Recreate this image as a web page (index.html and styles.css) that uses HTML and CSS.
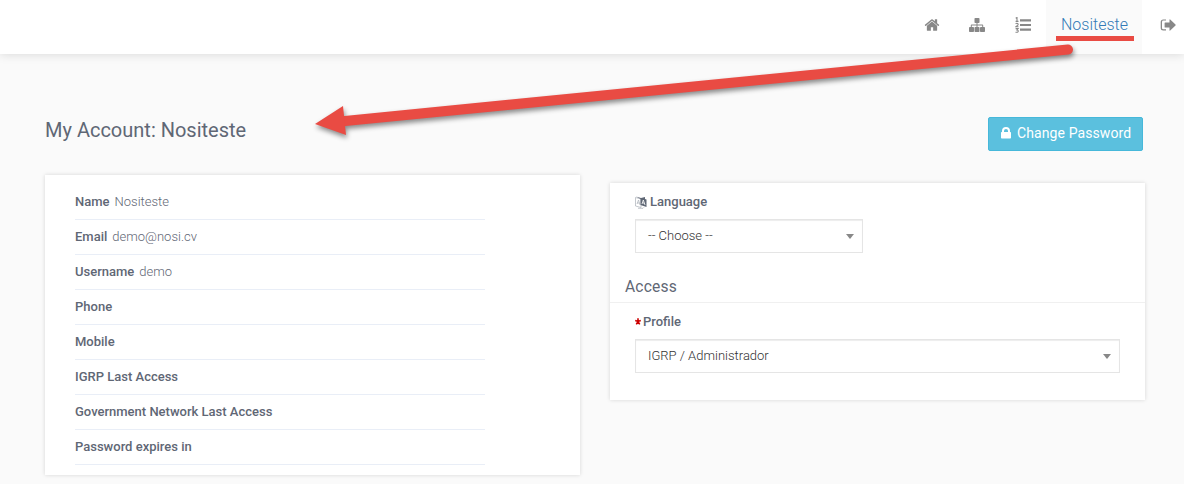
FILE: index.html
```html
<!DOCTYPE html>
<html lang="en">
<head>
<meta charset="utf-8">
<title>My Account</title>
<link rel="stylesheet" href="styles.css">
</head>
<body>
<header class="topbar">
  <nav class="nav">
    <a class="nav-item home"><svg class="icon" viewBox="0 0 1792 1792"><path d="M1472 992v480q0 26-19 45t-45 19h-384v-384h-256v384h-384q-26 0-45-19t-19-45v-480q0-1 .5-3t.5-3l575-474 575 474q1 2 1 6zm223-69l-62 74q-8 9-21 11h-3q-13 0-21-7l-692-577-692 577q-12 8-24 7-13-2-21-11l-62-74q-8-10-7-23.5t11-21.5l719-599q32-26 76-26t76 26l244 204v-195q0-14 9-23t23-9h192q14 0 23 9t9 23v408l219 182q10 8 11 21.5t-7 23.5z"/></svg></a>
    <a class="nav-item"><svg class="icon" viewBox="0 0 16 16"><rect x="5.5" y="1" width="5" height="5" rx=".8"/><rect x="0" y="10" width="5" height="5" rx=".8"/><rect x="5.5" y="10" width="5" height="5" rx=".8"/><rect x="11" y="10" width="5" height="5" rx=".8"/><path d="M7.5 5h1v2.4H13.400q.8 0 .8.8V11h-1V8.400H8.500V11h-1V8.400H2.800V11h-1V8.200q0-.8.8-.8H7.500z"/></svg></a>
    <a class="nav-item"><svg class="icon" viewBox="0 0 16 16"><path d="M5 2.200h11v2.200H5zM5 6.900h11v2.200H5zM5 11.600h11v2.200H5z"/><path class="digits" d="M.7 1.300L2 .5v4M.6 4.400h2.900M.6 6.900q1-1 2-.4t.2 1.600L.8 9.700h2.700M.6 11.600h2.500L2 13q1.400 0 1.200 1.300T.5 15.200"/></svg></a>
    <a class="nav-item active"><span class="user">Nositeste</span></a>
    <a class="nav-item last"><svg class="icon" viewBox="0 0 16 16"><path d="M6 2.400v1.200H3.300Q2 3.600 2 5v6q0 1.300 1.300 1.300H6v1.200H3.300Q.7 13.500.7 11V5Q.7 2.400 3.300 2.400z"/><path d="M9.500 2.700q0-.8.700-.3l5.300 5.200q.4.400 0 .8l-5.300 5.200q-.7.500-.7-.3V10.500H5.200q-.6 0-.6-.6V6.100q0-.6.6-.6H9.500z"/></svg></a>
  </nav>
</header>
<main class="content">
  <div class="heading">
    <h1 class="title">My Account: Nositeste</h1>
    <button class="button"><svg class="lock" viewBox="0 0 10 12"><path d="M1 5V4a4 4 0 0 1 8 0v1h.3q.7 0 .7.700v5q0 .8-.8.8H.8q-.8 0-.8-.8v-5Q0 5 .7 5zm2 0h4V4a2 2 0 0 0-4 0z"/></svg>Change Password</button>
  </div>
  <div class="columns">
    <section class="card details">
      <div class="row"><b>Name</b><span>Nositeste</span></div>
      <div class="row"><b>Email</b><span>demo@nosi.cv</span></div>
      <div class="row"><b>Username</b><span>demo</span></div>
      <div class="row"><b>Phone</b></div>
      <div class="row"><b>Mobile</b></div>
      <div class="row"><b>IGRP Last Access</b></div>
      <div class="row"><b>Government Network Last Access</b></div>
      <div class="row"><b>Password expires in</b></div>
    </section>
    <section class="card settings">
      <div class="field">
        <div class="label"><svg class="language" viewBox="0 0 12 13"><path class="page" d="M.5 1.500L6 3v8.500L.5 10zM2 8l1.500-4L5 9M2.300 7h2.200M3 12.300h5l1-1"/><path class="sheet" d="M1 .5l5 1.500 4-1v2l1.500.5V11L5.500 9V3z"/><path class="letter" d="M7 8l1.300-4L10 9M7.500 6.800l2 .5"/></svg>Language</div>
        <div class="select short">-- Choose --<i class="caret"></i></div>
      </div>
      <h2 class="subtitle">Access</h2>
      <div class="field">
        <div class="label"><svg class="required" viewBox="0 0 6 7"><path d="M3 .3v3.200M.2 2.400L3 3.500l2.800-1.100M1.300 6.300L3 3.500l1.700 2.800"/></svg>Profile</div>
        <div class="select">IGRP / Administrador<i class="caret"></i></div>
      </div>
    </section>
  </div>
</main>
<svg class="arrow" viewBox="0 0 1184 484"><path d="M1068 49.500L340 121.500" class="shaft"/><path d="M315 124L343 106L346 135z" class="head"/></svg>
</body>
</html>
```
FILE: styles.css
```css
* { box-sizing: border-box; }
body {
  margin: 0;
  height: 484px;
  overflow: hidden;
  background: #fafafa;
  color: #5f6775;
  font: 300 13px/20px Roboto, sans-serif;
}
.topbar {
  height: 54px;
  background: #fff;
  box-shadow: 0 0 10px rgba(0, 0, 0, .15);
}
.nav { display: flex; justify-content: flex-end; height: 54px; }
.nav-item {
  display: flex;
  justify-content: center;
  width: 46px;
  padding-top: 17px;
}
.nav-item.home { padding-left: 2px; }
.nav-item.active { width: 96px; padding: 15px 0 0 2px; background: #fafafa; }
.nav-item.last { width: 42px; padding-left: 10px; }
.icon { width: 16px; height: 16px; fill: #888; }
.digits { fill: none; stroke: #888; stroke-width: 1.1; }
.user {
  height: 26px;
  width: 78px;
  padding-right: 1px;
  border-bottom: 5px solid #e94b43;
  color: #337ab7;
  font-size: 16px;
  text-align: center;
  white-space: nowrap;
}
.content { padding: 63px 39px 0 45px; }
.heading {
  display: flex;
  justify-content: space-between;
  height: 58px;
  padding-right: 2px;
}
.title { margin: 0; font-size: 20px; line-height: 26px; font-weight: 400; }
.button {
  display: flex;
  align-items: center;
  gap: 6px;
  width: 155px;
  height: 34px;
  padding: 0 0 2px 12px;
  border: 1px solid #46b8da;
  border-radius: 2px;
  background: #5bc0de;
  color: #fff;
  font: 400 14px/20px Roboto, sans-serif;
  letter-spacing: .1px;
  white-space: nowrap;
}
.lock { width: 10px; height: 12px; margin-bottom: 1px; fill: #fff; }
.columns { display: flex; align-items: flex-start; gap: 30px; }
.card {
  width: 535px;
  background: #fff;
  box-shadow: 0 0 4px rgba(0, 0, 0, .15);
}
.details { height: 300px; padding: 10px 95px 0 30px; }
.row {
  display: flex;
  gap: 5px;
  height: 35px;
  padding-top: 7px;
  border-bottom: 1px solid #e9eef7;
}
b { font-weight: 500; }
.settings { height: 217px; margin-top: 8px; padding-top: 9px; }
.field { padding: 0 25px; }
.label { display: flex; align-items: center; height: 27px; padding-bottom: 7px; font-weight: 500; }
.language { width: 12px; height: 13px; margin-right: 3px; }
.page { fill: none; stroke: #aab0b8; stroke-width: .7; }
.sheet { fill: #5f6775; }
.letter { fill: none; stroke: #fff; stroke-width: .8; }
.required { width: 6px; height: 7px; margin: 0 2px 1px 0; fill: none; stroke: #c00; stroke-width: 1.6; }
.select {
  display: flex;
  align-items: center;
  justify-content: space-between;
  height: 34px;
  padding: 0 8px 0 12px;
  border: 1px solid #e5e5e5;
  box-shadow: inset 0 1px 1px rgba(0, 0, 0, .075);
  color: #333;
}
.short { width: 228px; }
.caret {
  margin-top: 1px;
  border: 4px solid transparent;
  border-top: 5px solid #888;
  border-bottom: 0;
}
.subtitle {
  height: 38px;
  margin: 12px 0 9px;
  padding: 12px 15px 0;
  border-bottom: 1px solid #f0f0f0;
  font-size: 15.6px;
  line-height: 20px;
  letter-spacing: .2px;
  font-weight: 400;
}
.arrow {
  position: absolute;
  top: 0;
  left: 0;
  width: 1184px;
  height: 484px;
  filter: drop-shadow(1px 3px 2.500px rgba(0, 0, 0, .45));
  pointer-events: none;
}
.shaft { stroke: #e94b43; stroke-width: 10; stroke-linecap: round; }
.head { fill: #e94b43; }
```
